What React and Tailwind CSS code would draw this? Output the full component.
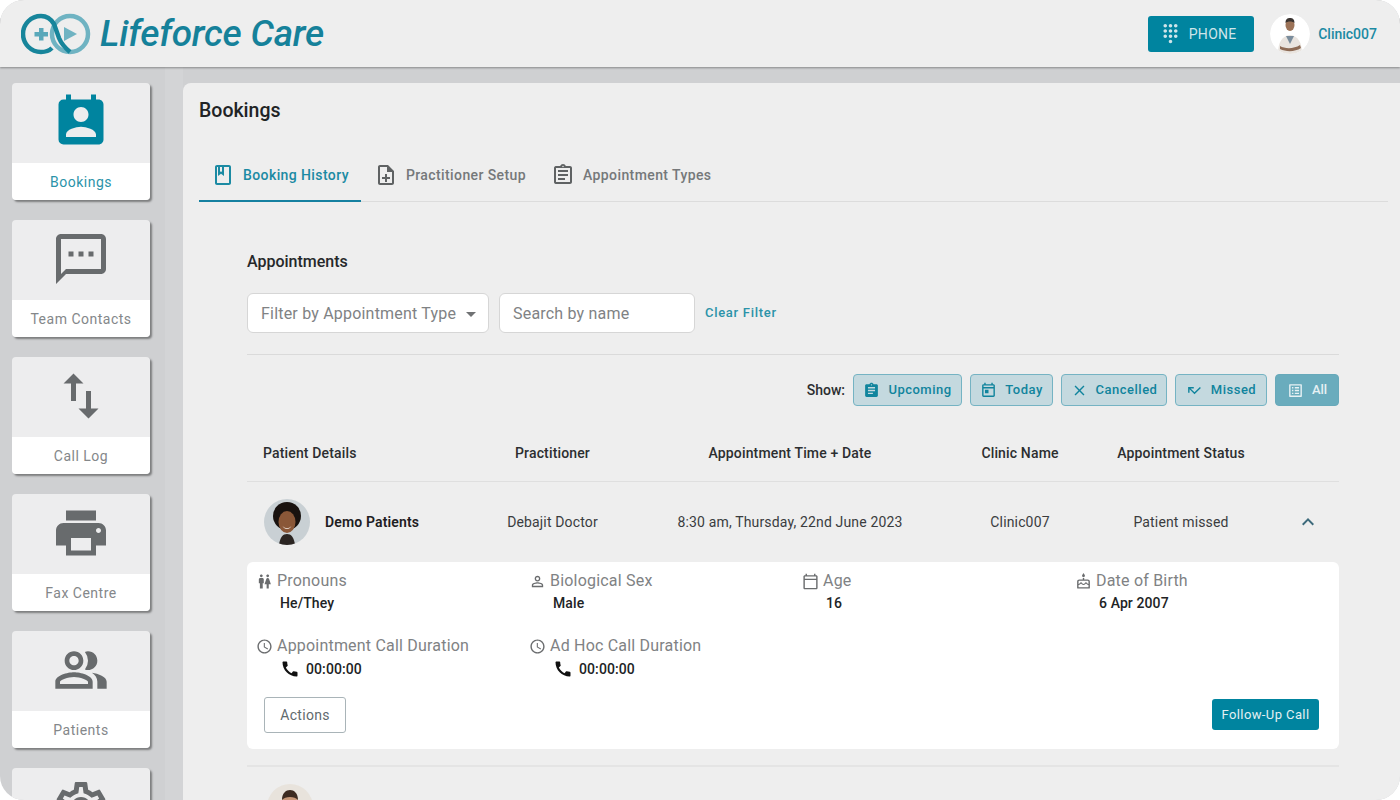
import {
  MdPermContactCalendar, MdOutlineTextsms, MdSwapVert, MdPrint, MdOutlinePeopleAlt, MdOutlineSettings,
  MdDialpad, MdOutlineBook, MdOutlineNoteAdd, MdOutlineAssignment, MdAssignment, MdOutlineToday, MdClose,
  MdCallMissed, MdOutlineListAlt, MdWc, MdOutlinePersonOutline, MdOutlineCalendarToday, MdOutlineCake,
  MdOutlineAccessTime, MdCall, MdExpandLess, MdArrowDropDown,
} from "react-icons/md"

const navItems = [
  { label: "Bookings", icon: MdPermContactCalendar, active: true },
  { label: "Team Contacts", icon: MdOutlineTextsms },
  { label: "Call Log", icon: MdSwapVert },
  { label: "Fax Centre", icon: MdPrint },
  { label: "Patients", icon: MdOutlinePeopleAlt, size: 56 },
  { label: "Settings", icon: MdOutlineSettings },
]

const filters = [
  { label: "Upcoming", icon: MdAssignment, w: "w-[109px]" },
  { label: "Today", icon: MdOutlineToday, w: "w-[83px]" },
  { label: "Cancelled", icon: MdClose, w: "w-[106px]" },
  { label: "Missed", icon: MdCallMissed, w: "w-[92px]" },
]

const details = [
  { label: "Pronouns", value: "He/They", icon: MdWc },
  { label: "Biological Sex", value: "Male", icon: MdOutlinePersonOutline },
  { label: "Age", value: "16", icon: MdOutlineCalendarToday },
  { label: "Date of Birth", value: "6 Apr 2007", icon: MdOutlineCake },
]

const rowGrid = "grid grid-cols-[233px_145px_330px_130px_192px_62px] items-center"

function Logo() {
  return (
    <svg width="70" height="42" viewBox="0 0 70 42" fill="none">
      <circle cx="49" cy="21" r="18" stroke="#6fb3c2" strokeWidth="4.500" />
      <path d="M31 35c-3 3-7 4-11 4a18 18 0 1 1 0-36c6 0 10 3 13 8l5 14c2 5 5 9 11 14" stroke="#17859b" strokeWidth="4.500" fill="none" />
      <path d="M43 14l13 7-13 7z" fill="#6fb3c2" />
      <path d="M18 15h4.500v4h4.500v4.500h-4.500v4h-4.500v-4h-4.500v-4.500h4.500z" fill="#5aa8ba" />
    </svg>
  )
}

function DoctorAvatar() {
  return (
    <svg width="40" height="40" viewBox="0 0 40 40" className="rounded-full bg-white">
      <path d="M8 40c0-12 4-18 12-19 8 1 12 7 12 19z" fill="#e9e4df" />
      <path d="M16 22l4 8 4-8z" fill="#7a8c9c" />
      <ellipse cx="20" cy="11" rx="4.5" ry="6" fill="#9c7358" />
      <path d="M15.5 9c0-4 2-5 4.500-5s4.500 1 4.500 5c-2-2-7-2-9 0z" fill="#3a3431" />
      <path d="M10 32c5 3 14 3 20-1l1 3c-6 4-15 4-21 1z" fill="#8d6b55" />
    </svg>
  )
}

function PatientAvatar() {
  return (
    <svg width="46" height="46" viewBox="0 0 46 46" className="rounded-full bg-[#c9d0d4]">
      <circle cx="23" cy="17" r="14" fill="#19120f" />
      <ellipse cx="23" cy="23" rx="8.500" ry="11" fill="#8a5738" />
      <path d="M15 46c1-8 4-11 8-11s7 3 8 11z" fill="#2b2522" />
      <path d="M18.500 27c3 3 6 3 9 0-2 4-7 4-9 0z" fill="#f4e9e2" />
    </svg>
  )
}

function ManAvatar() {
  return (
    <svg width="46" height="46" viewBox="0 0 46 46" className="rounded-full bg-[#e8e3dc]">
      <ellipse cx="23" cy="19" rx="8" ry="11" fill="#c79778" />
      <path d="M15 16c0-7 4-10 8-10s8 3 8 10c-3-4-13-4-16 0z" fill="#3c2a20" />
    </svg>
  )
}

function NavCard({ item }) {
  const Icon = item.icon
  return (
    <div className="w-[138px] h-[117px] shrink-0 rounded-[4px] overflow-hidden flex flex-col shadow-[2px_2px_2px_rgba(0,0,0,0.4)]">
      <div className={`h-[80px] pb-[3px] bg-[#ededee] flex items-center justify-center ${item.active ? "text-[#00849f]" : "text-[#686b6d]"}`}>
        <Icon size={item.size || 60} />
      </div>
      <div className={`flex-1 bg-white flex items-center justify-center text-sm tracking-[0.5px] ${item.active ? "text-[#2b93a9]" : "text-[#84878a]"}`}>
        {item.label}
      </div>
    </div>
  )
}

function Tab({ icon: Icon, label, active }) {
  return (
    <div className={`h-[52px] -mb-px px-3 ml-px first:ml-0 border-b-2 flex items-center gap-2 text-sm font-medium tracking-[0.4px] ${active ? "text-[#1b8aa3] border-[#1580a0]" : "text-[#75787a] border-transparent"}`}>
      <Icon size={24} className={active ? "" : "text-[#5f6263]"} />
      <span>{label}</span>
    </div>
  )
}

function FilterButton({ item }) {
  const Icon = item.icon
  return (
    <button className={`${item.w} h-8 rounded-[4px] border-[1.5px] border-[#75b3c3] bg-[#c4d9df] text-[#10849d] text-[13px] font-medium tracking-[0.5px] flex items-center justify-center gap-2`}>
      <Icon size={17} />
      {item.label}
    </button>
  )
}

function DetailCell({ icon: Icon, label, children }) {
  return (
    <div>
      <div className="flex items-center gap-[4px] text-base text-[#808284] h-5 tracking-[0.2px]">
        <Icon size={17} className="shrink-0 text-[#6a6c6e]" />
        {label}
      </div>
      {children}
    </div>
  )
}

export default function App() {
  return (
    <div className="w-[1400px] h-[800px] bg-white overflow-hidden [font-family:Roboto,sans-serif]">
      <div className="w-full h-full rounded-[24px] overflow-hidden bg-[#cfd0d2] flex flex-col">
        <header className="h-[67px] shrink-0 bg-[#eeeeee] shadow-[0_1px_2px_rgba(0,0,0,0.35)] z-10 flex items-center justify-between pl-[21px] pr-[23px]">
          <div className="flex items-center gap-[9px]">
            <Logo />
            <span className="[font-family:'Noto_Sans',sans-serif] italic font-medium text-[37px] leading-none tracking-[-0.2px] text-[#15819a]">Lifeforce Care</span>
          </div>
          <div className="flex items-center">
            <button className="w-[106px] h-9 pr-[6px] rounded-[3px] bg-[#00849f] text-[#cfe5ea] text-sm tracking-[0.3px] flex items-center justify-center gap-[8px]">
              <MdDialpad size={21} />
              PHONE
            </button>
            <div className="ml-4 mr-2 rounded-full overflow-hidden w-10 h-10">
              <DoctorAvatar />
            </div>
            <span className="text-sm font-medium text-[#1b8aa3]">Clinic007</span>
          </div>
        </header>

        <div className="flex-1 flex min-h-0">
          <aside className="w-[165px] shrink-0 pl-3 pt-4 flex flex-col gap-5 overflow-hidden">
            {navItems.map((item) => (
              <NavCard key={item.label} item={item} />
            ))}
          </aside>
          <div className="w-[18px] shrink-0 bg-[#d3d4d6]" />

          <main className="flex-1 mt-4 bg-[#eeeeee] rounded-tl-[8px] pl-4 pr-3 overflow-hidden">
            <h1 className="text-[19.5px] font-medium text-[#212325] leading-6 pt-4">Bookings</h1>
            <nav className="flex mt-[27px] border-b border-[#dcdcdc]">
              <Tab icon={MdOutlineBook} label="Booking History" active />
              <Tab icon={MdOutlineNoteAdd} label="Practitioner Setup" />
              <Tab icon={MdOutlineAssignment} label="Appointment Types" />
            </nav>

            <div className="ml-12 w-[1092px]">
              <h2 className="mt-[50px] text-base font-medium text-[#26282a] leading-5">Appointments</h2>
              <div className="flex items-center mt-[21px] pb-[21px] border-b border-[#dadada]">
                <div className="w-[242px] h-10 bg-white border border-[#d6d6d6] rounded-[6px] flex items-center justify-between pl-[13px] pr-[5px] pt-px text-base tracking-[0.2px] text-[#808284] whitespace-nowrap">
                  Filter by Appointment Type
                  <MdArrowDropDown size={24} className="text-[#707274]" />
                </div>
                <div className="w-[196px] h-10 ml-[10px] bg-white border border-[#d6d6d6] rounded-[6px] flex items-center px-[13px] pt-px text-base tracking-[0.2px] text-[#808284]">
                  Search by name
                </div>
                <span className="ml-[10px] text-[13px] font-medium tracking-[0.7px] text-[#2b93a9] -mt-[1px]">Clear Filter</span>
              </div>

              <div className="flex items-center justify-end gap-2 mt-[19px]">
                <span className="text-sm font-medium text-[#2c2e30]">Show:</span>
                {filters.map((item) => (
                  <FilterButton key={item.label} item={item} />
                ))}
                <button className="w-[64px] h-8 rounded-[4px] bg-[#6aacbd] border-[1.5px] border-[#67a9ba] text-[#e6f1f4] text-[13px] font-medium flex items-center justify-center gap-2">
                  <MdOutlineListAlt size={17} />
                  All
                </button>
              </div>

              <div className={`${rowGrid} h-[76px] border-b border-[#dfdfdf] text-sm font-medium tracking-[0.15px] text-[#2c2e30] pt-[18px]`}>
                <div className="pl-4">Patient Details</div>
                <div className="text-center">Practitioner</div>
                <div className="text-center">Appointment Time + Date</div>
                <div className="text-center">Clinic Name</div>
                <div className="text-center">Appointment Status</div>
                <div />
              </div>

              <div className={`${rowGrid} h-[80px] text-sm tracking-[0.15px] text-[#3a3c3e]`}>
                <div className="flex items-center pl-[17px] gap-[15px]">
                  <PatientAvatar />
                  <span className="font-semibold text-[#1e2022]">Demo Patients</span>
                </div>
                <div className="text-center">Debajit Doctor</div>
                <div className="text-center">8:30 am, Thursday, 22nd June 2023</div>
                <div className="text-center">Clinic007</div>
                <div className="text-center">Patient missed</div>
                <div className="flex justify-center"><MdExpandLess size={24} className="text-[#3d6a7b]" /></div>
              </div>

              <section className="h-[187px] bg-white rounded-[6px] pl-[9px] pr-5 pt-[9px] relative">
                <div className="grid grid-cols-[273px_273px_273px_1fr]">
                  {details.map((d) => (
                    <DetailCell key={d.label} icon={d.icon} label={d.label}>
                      <div className="pl-[24px] mt-[2px] text-sm font-medium tracking-[0.1px] text-[#212325] leading-5">{d.value}</div>
                    </DetailCell>
                  ))}
                </div>
                <div className="grid grid-cols-[273px_273px_273px_1fr] mt-[23px]">
                  <DetailCell icon={MdOutlineAccessTime} label="Appointment Call Duration">
                    <div className="pl-[24px] mt-[3px] flex items-center gap-[6px] text-sm font-medium tracking-[0.1px] text-[#212325] leading-5">
                      <MdCall size={20} className="text-[#111]" />00:00:00
                    </div>
                  </DetailCell>
                  <DetailCell icon={MdOutlineAccessTime} label="Ad Hoc Call Duration">
                    <div className="pl-[24px] mt-[3px] flex items-center gap-[6px] text-sm font-medium tracking-[0.1px] text-[#212325] leading-5">
                      <MdCall size={20} className="text-[#111]" />00:00:00
                    </div>
                  </DetailCell>
                </div>
                <div className="flex items-start justify-between mt-[18px] pl-[8px]">
                  <button className="w-[82px] h-9 rounded-[3px] border border-[#a9b4b8] bg-white text-sm text-[#5f6a6e] tracking-[0.3px]">Actions</button>
                  <button className="w-[107px] h-[31px] mt-[2px] rounded-[3px] bg-[#00849f] text-[13px] text-[#e3f0f3] tracking-[0.4px] flex items-center justify-center">Follow-Up Call</button>
                </div>
              </section>

              <div className="mt-[16px] border-t-2 border-[#e4e4e4]" />
              <div className={`${rowGrid} h-[80px] text-sm tracking-[0.15px] text-[#3a3c3e]`}>
                <div className="flex items-center pl-[20px] gap-[12px]">
                  <ManAvatar />
                  <span className="font-semibold text-[#1e2022]">Demo Patient</span>
                </div>
                <div className="text-center">Debajit Doctor</div>
                <div className="text-center">10:00 am, Thursday, 22nd June 2023</div>
                <div className="text-center">Clinic007</div>
                <div className="text-center">Call disconnected</div>
                <div />
              </div>
            </div>
          </main>
        </div>
      </div>
    </div>
  )
}
